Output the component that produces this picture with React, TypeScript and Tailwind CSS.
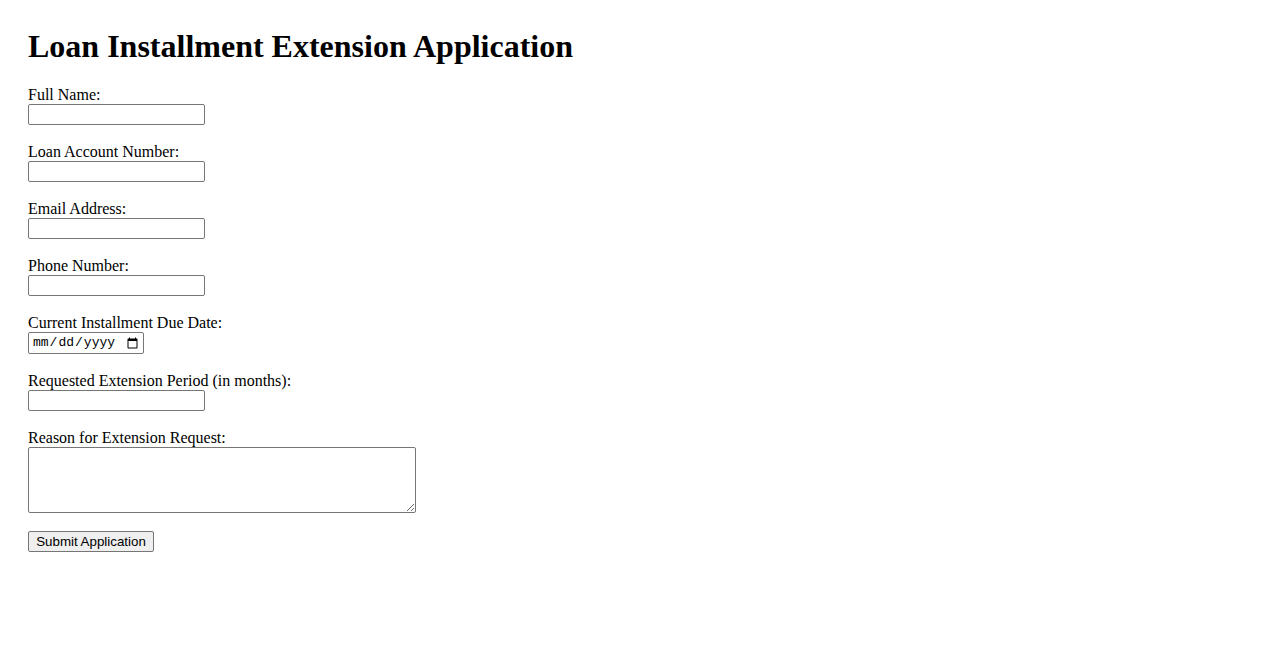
import React from "react";

const inputCls =
  "block w-[177px] h-[21px] border border-[#767676] rounded-[2px] bg-white px-[2px] py-[1px] text-[13.33px] font-['Liberation_Sans',Arial,sans-serif] outline-none";

function Field({ label, children }: { label: string; children: React.ReactNode }) {
  return (
    <div className="flex flex-col items-start mb-[18px]">
      <label className="block text-[16px] leading-[18px]">{label}</label>
      {children}
    </div>
  );
}

export default function App() {
  return (
    <div className="min-h-[650px] bg-white text-black font-['Liberation_Serif','Times_New_Roman',serif] px-[28px] pt-[28px]">
      <h1 className="text-[32px] leading-[37px] font-bold mb-[21px]">Loan Installment Extension Application</h1>
      <form className="flex flex-col items-start" onSubmit={(e) => e.preventDefault()}>
        <Field label="Full Name:">
          <input type="text" className={inputCls} />
        </Field>
        <Field label="Loan Account Number:">
          <input type="text" className={inputCls} />
        </Field>
        <Field label="Email Address:">
          <input type="email" className={inputCls} />
        </Field>
        <Field label="Phone Number:">
          <input type="tel" className={inputCls} />
        </Field>
        <Field label="Current Installment Due Date:">
          <input
            type="date"
            className="block w-[116px] h-[22px] border border-[#767676] rounded-[2px] bg-white pl-[3px] pr-[2px] py-0 text-[13px] font-['Liberation_Mono','Courier_New',monospace] outline-none"
          />
        </Field>
        <div className="flex flex-col items-start mb-[18px] -mt-[0px]">
          <label className="block text-[16px] leading-[18px]">Requested Extension Period (in months):</label>
          <input type="number" className={inputCls} />
        </div>
        <Field label="Reason for Extension Request:">
          <textarea className="block w-[388px] h-[66px] border border-[#767676] rounded-[2px] bg-white p-[2px] text-[13.33px] font-['Liberation_Mono',monospace] outline-none resize" />
        </Field>
        <button
          type="submit"
          className="h-[21px] w-[126px] bg-[#efefef] border border-[#767676] rounded-[2px] px-[6px] text-[13.33px] leading-[17px] text-black font-['Liberation_Sans',Arial,sans-serif]"
        >
          Submit Application
        </button>
      </form>
    </div>
  );
}
